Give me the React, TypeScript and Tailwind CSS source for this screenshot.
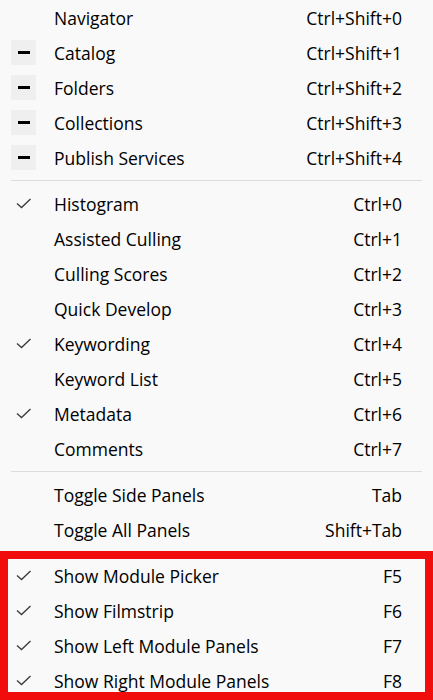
import React from 'react';

type Mark = 'none' | 'check' | 'minus';

interface Item {
  label: string;
  shortcut: string;
  mark: Mark;
}

const groups: Item[][] = [
  [
    { label: 'Navigator', shortcut: 'Ctrl+Shift+0', mark: 'none' },
    { label: 'Catalog', shortcut: 'Ctrl+Shift+1', mark: 'minus' },
    { label: 'Folders', shortcut: 'Ctrl+Shift+2', mark: 'minus' },
    { label: 'Collections', shortcut: 'Ctrl+Shift+3', mark: 'minus' },
    { label: 'Publish Services', shortcut: 'Ctrl+Shift+4', mark: 'minus' },
  ],
  [
    { label: 'Histogram', shortcut: 'Ctrl+0', mark: 'check' },
    { label: 'Assisted Culling', shortcut: 'Ctrl+1', mark: 'none' },
    { label: 'Culling Scores', shortcut: 'Ctrl+2', mark: 'none' },
    { label: 'Quick Develop', shortcut: 'Ctrl+3', mark: 'none' },
    { label: 'Keywording', shortcut: 'Ctrl+4', mark: 'check' },
    { label: 'Keyword List', shortcut: 'Ctrl+5', mark: 'none' },
    { label: 'Metadata', shortcut: 'Ctrl+6', mark: 'check' },
    { label: 'Comments', shortcut: 'Ctrl+7', mark: 'none' },
  ],
  [
    { label: 'Toggle Side Panels', shortcut: 'Tab', mark: 'none' },
    { label: 'Toggle All Panels', shortcut: 'Shift+Tab', mark: 'none' },
  ],
  [
    { label: 'Show Module Picker', shortcut: 'F5', mark: 'check' },
    { label: 'Show Filmstrip', shortcut: 'F6', mark: 'check' },
    { label: 'Show Left Module Panels', shortcut: 'F7', mark: 'check' },
    { label: 'Show Right Module Panels', shortcut: 'F8', mark: 'check' },
  ],
];

const MarkIcon: React.FC<{ mark: Mark }> = ({ mark }) => {
  if (mark === 'minus') {
    return (
      <div className="w-[25px] h-[25px] bg-[#efefef] flex items-center justify-center">
        <div className="w-[12px] h-[3px] bg-black" />
      </div>
    );
  }
  if (mark === 'check') {
    return (
      <div className="w-[25px] h-[25px] flex items-center justify-center">
        <svg width="16" height="11" viewBox="0 0 16 11" fill="none">
          <path d="M1 5.5 L5.5 9.5 L14.5 1" stroke="#3a3a3a" strokeWidth="1.3" />
        </svg>
      </div>
    );
  }
  return <div className="w-[25px] h-[25px]" />;
};

const App: React.FC = () => {
  return (
    <div
      className="relative w-[433px] h-[700px] overflow-hidden bg-[#f9f9f9] text-black"
      style={{ fontFamily: '"Segoe UI", "Open Sans", "Noto Sans", sans-serif' }}
    >
      {groups.map((group, gi) => (
        <div key={gi}>
          {gi > 0 && <div className="mx-[11px] my-[5px] h-px bg-[#dcdcdc]" />}
          {group.map((item) => (
            <div key={item.label} className="h-[35px] flex items-center pl-[11px] pr-[31px] text-[17.5px]">
              <MarkIcon mark={item.mark} />
              <span className="ml-[18px] flex-1 pt-[2px]">{item.label}</span>
              <span className="pt-[2px]">{item.shortcut}</span>
            </div>
          ))}
        </div>
      ))}

      {/* highlight box */}
      <div className="absolute left-0 top-[551px] w-[433px] h-[149px] border-[8px] border-[#f20d0d] pointer-events-none" />
    </div>
  );
};

export default App;
